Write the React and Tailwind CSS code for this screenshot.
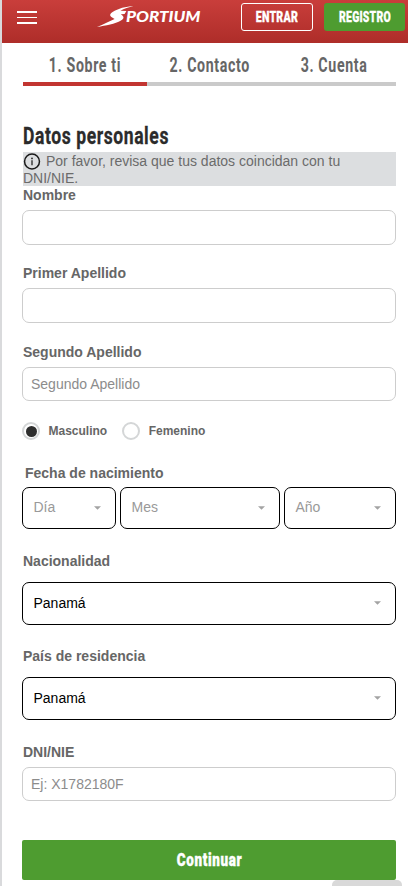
import React, { useState } from 'react';

const steps = ['1. Sobre ti', '2. Contacto', '3. Cuenta'];

const Logo = () => (
  <svg width="108" height="24" viewBox="0 0 108 24" fill="#fff" aria-label="Sportium">
    <path d="M37.5 2 C30 2.4 22 4.6 16.6 8 C13.4 10.2 13.6 11.8 15.8 13.2 L18.6 15 C14 17.4 7.4 20.2 1 23 C10 21.8 19 20 25 16.6 C28 14.8 28.2 13.2 26.4 11.6 L24.8 10.2 L28.6 10 L30.4 7 L24.4 6.8 C28 4.8 33 3.2 37.5 2 Z" />
    <text x="30" y="17.8" fontFamily="Lato, sans-serif" fontWeight="900" fontStyle="italic" fontSize="14.6" textLength="74.5" lengthAdjust="spacingAndGlyphs">PORTIUM</text>
  </svg>
);

const Header = () => (
  <header className="flex h-[43px] items-start bg-gradient-to-b from-[#c93e3b] to-[#ae2d29] pr-[3px] pl-[15px]">
    <button className="mt-[11px] flex w-5 flex-col gap-[4px]" aria-label="Menú">
      <span className="h-[1.5px] w-full bg-white" />
      <span className="h-[1.5px] w-full bg-white" />
      <span className="h-[1.5px] w-full bg-white" />
    </button>
    <div className="mt-[4px] ml-[59px]">
      <Logo />
    </div>
    <div className="mt-[3px] ml-auto flex gap-[11px] font-[Roboto,sans-serif] text-[14.5px] font-black text-white">
      <button className="flex h-7 w-[72px] items-center justify-center rounded-[3px] border border-white">
        <span className="mt-px block scale-x-[0.73] tracking-[0.3px] [-webkit-text-stroke:0.3px_white]">ENTRAR</span>
      </button>
      <button className="flex h-7 w-[81px] items-center justify-center rounded-[3px] bg-[#4e9c30]">
        <span className="mt-px block scale-x-[0.72] tracking-[0.3px] [-webkit-text-stroke:0.3px_white]">REGISTRO</span>
      </button>
    </div>
  </header>
);

const Steps = () => (
  <div>
    <div className="grid h-[39px] grid-cols-3 pt-[5px] pl-px font-[Roboto,sans-serif] text-[20px] leading-[34px] font-bold text-[#666]">
      {steps.map((step) => (
        <div key={step} className="flex justify-center whitespace-nowrap">
          <span className="block scale-x-[0.71] tracking-[0.9px]">{step}</span>
        </div>
      ))}
    </div>
    <div className="ml-px h-1 bg-[#cacaca]">
      <div className="h-full w-1/3 bg-[#c23531]" />
    </div>
  </div>
);

const Label = ({ children }) => (
  <div className="pl-px text-[14px] leading-[18px] font-bold whitespace-nowrap text-[#666]">{children}</div>
);

const Field = ({ label, placeholder }) => (
  <label className="block">
    <Label>{label}</Label>
    <input
      type="text"
      placeholder={placeholder}
      className="mt-[6px] block h-[34.5px] w-full rounded-[7px] border border-[#cdcdcd] bg-white px-2 text-[14px] placeholder:text-[#8c8c8c]"
    />
  </label>
);

const Select = ({ value, className = 'w-full text-black' }) => (
  <button className={`flex h-[42.5px] items-center justify-between rounded-[7px] border border-black bg-white pr-[14px] text-[14px] ${className}`}>
    <span className="pl-[10.5px]">{value}</span>
    <svg width="7" height="4" viewBox="0 0 8 4" fill="#a3a3a3">
      <path d="M0 0h8L4 4z" />
    </svg>
  </button>
);

const Radio = ({ label, checked, onChange }) => (
  <label className="flex items-center text-[12px] font-bold text-[#666]">
    <input type="radio" name="sexo" checked={checked} onChange={onChange} className="sr-only" />
    <span className="mr-[8.5px] flex h-[18px] w-[18px] items-center justify-center rounded-full border-2 border-[#d4d6d7]">
      {checked && <span className="h-[11px] w-[11px] rounded-full bg-[#2e2e2e]" />}
    </span>
    {label}
  </label>
);

const App = () => {
  const [gender, setGender] = useState('Masculino');

  return (
    <div className="relative h-[886px] w-[408px] overflow-hidden border-l-2 border-[#d9dadc] bg-white font-['Liberation_Sans',Arial,sans-serif]">
      <Header />
      <main className="pr-3 pl-5">
        <Steps />

        <h1 className="mt-[34px] ml-px h-8 origin-left scale-x-[0.73] font-[Roboto,sans-serif] text-[24px] leading-[32px] font-bold tracking-[0.8px] whitespace-nowrap text-[#2b2b2b] [-webkit-text-stroke:0.3px_#2b2b2b]">
          Datos personales
        </h1>

        {/* Notice above the form */}
        <div className="ml-px h-[34px] bg-[#dcdee0] pt-[0.75px] text-[14px] leading-[17.5px] text-[#6b6b6b]">
          <svg width="18" height="17" viewBox="0 0 18 18" fill="none" stroke="#1a1a1a" className="mt-[0.25px] mr-[5px] inline-block align-top">
            <circle cx="9" cy="9" r="7.9" strokeWidth="1.6" />
            <path d="M9 7.8v5.2" strokeWidth="1.3" />
            <circle cx="9" cy="5.7" r=".9" fill="#1a1a1a" stroke="none" />
          </svg>
          Por favor, revisa que tus datos coincidan con tu DNI/NIE.
        </div>

        <div className="flex flex-col">
          <Field label="Nombre" />
          <div className="my-[19.5px]">
            <Field label="Primer Apellido" />
          </div>
          <div className="mt-[0.5px]">
            <Field label="Segundo Apellido" placeholder="Segundo Apellido" />
          </div>
        </div>

        <div className="mt-5 flex h-5 gap-[15px]">
          {['Masculino', 'Femenino'].map((item) => (
            <Radio key={item} label={item} checked={gender === item} onChange={() => setGender(item)} />
          ))}
        </div>

        <div className="mt-[23px] pl-[2px]">
          <Label>Fecha de nacimiento</Label>
        </div>
        <div className="mt-[4.5px] flex gap-1">
          <Select value="Día" className="w-[94px] text-[#999]" />
          <Select value="Mes" className="w-[160px] text-[#999]" />
          <Select value="Año" className="flex-1 text-[#999]" />
        </div>

        <div className="mt-[23px] flex flex-col gap-3">
          <Label>Nacionalidad</Label>
          <Select value="Panamá" />
        </div>
        <div className="mt-[22.5px] flex flex-col gap-3">
          <Label>País de residencia</Label>
          <Select value="Panamá" />
        </div>

        <div className="mt-[23px]">
          <Field label="DNI/NIE" placeholder="Ej: X1782180F" />
        </div>

        <button className="mt-[38.5px] flex h-[40.5px] w-full items-center justify-center rounded-[2px] bg-[#4e9c30] font-[Roboto,sans-serif] text-[17.5px] font-black text-white">
          <span className="block scale-x-[0.77] tracking-[0.8px] [-webkit-text-stroke:0.4px_white]">Continuar</span>
        </button>
      </main>

      {/* Top edge of the floating tab at the bottom of the page */}
      <div className="absolute right-[6px] -bottom-1 h-[10px] w-[70px] rounded-t-[5px] bg-[#d9d9d9]" />
    </div>
  );
};

export default App;
